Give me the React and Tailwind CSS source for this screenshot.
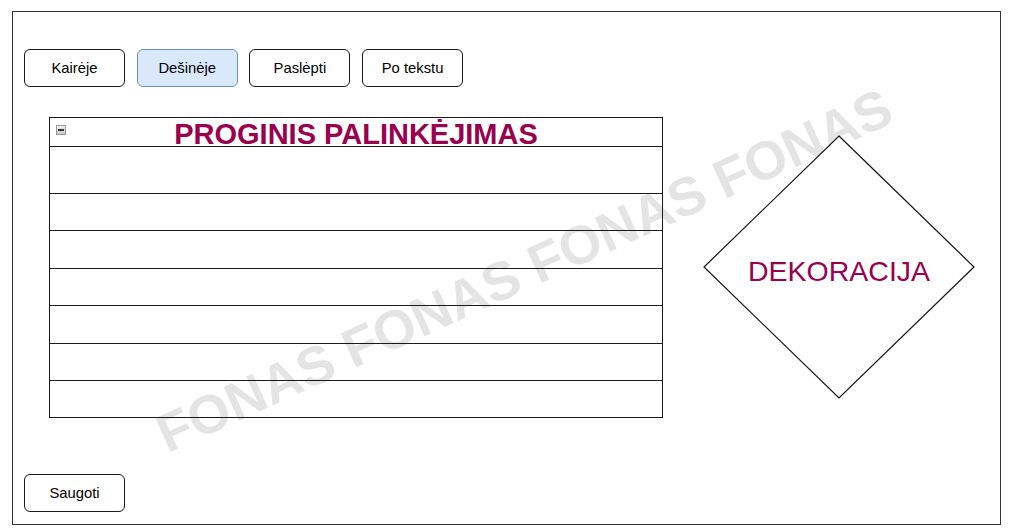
const buttons = [
  { label: 'Kairėje', active: false },
  { label: 'Dešinėje', active: true },
  { label: 'Paslėpti', active: false },
  { label: 'Po tekstu', active: false },
];

const rowHeights = ['h-[47px]', 'h-[37px]', 'h-[38px]', 'h-[37px]', 'h-[38px]', 'h-[37px]', 'h-[36px]'];

const Button = ({ label, active }) => (
  <button
    className={
      'w-[101px] h-[38px] rounded-[6px] border text-[14.8px] text-black ' +
      (active ? 'bg-[#dae8fc] border-[#6c8ebf]' : 'bg-white border-[#1a1a1a]')
    }
  >
    {label}
  </button>
);

const App = () => {
  return (
    <div className="w-[1012px] h-[532px] bg-white pt-[11px] pl-[12px] font-['Liberation_Sans',Arial,sans-serif]">
      <div className="relative w-[989px] h-[514px] border border-[#333] pt-[37px] pl-[11px] overflow-hidden">
        {/* watermark */}
        <div className="absolute left-[511px] top-[258px] -translate-x-1/2 -translate-y-1/2 rotate-[-24.5deg] whitespace-nowrap text-[54px] font-bold text-[#e4e4e4] leading-none pointer-events-none select-none">
          FONAS FONAS FONAS FONAS
        </div>

        <div className="relative flex gap-[11.7px]">
          {buttons.map(b => (
            <Button key={b.label} {...b} />
          ))}
        </div>

        <div className="relative flex items-start mt-[30px] ml-[25px]">
          <div className="w-[614px] border border-[#1a1a1a]">
            <div className="relative h-[29px] flex justify-center border-b border-[#1a1a1a]">
              <div className="absolute left-[6px] top-[7px] w-[10px] h-[10px] border border-[#9a9a9a] bg-gradient-to-b from-[#f2f2f2] to-[#c8c8c8] flex items-center justify-center">
                <div className="w-[6px] h-[2px] bg-[#333]" />
              </div>
              <span className="text-[29px] leading-[29px] mt-[2px] font-bold text-[#99004d] whitespace-nowrap">
                PROGINIS PALINKĖJIMAS
              </span>
            </div>
            {rowHeights.map((h, i) => (
              <div key={i} className={h + (i < rowHeights.length - 1 ? ' border-b border-[#1a1a1a]' : '')} />
            ))}
          </div>

          <div className="relative w-[272px] h-[264px] ml-[40px] mt-[18px]">
            <svg className="absolute inset-0" width="272" height="264" viewBox="0 0 272 264">
              <polygon points="136,1 271,132 136,263 1,132" fill="white" stroke="#111" strokeWidth="1.2" />
            </svg>
            <div className="absolute inset-0 flex items-center justify-center pt-[9px]">
              <span className="text-[28.5px] text-[#99004d] leading-none">DEKORACIJA</span>
            </div>
          </div>
        </div>

        <div className="relative mt-[56px]">
          <Button label="Saugoti" active={false} />
        </div>
      </div>
    </div>
  );
};

export default App;
